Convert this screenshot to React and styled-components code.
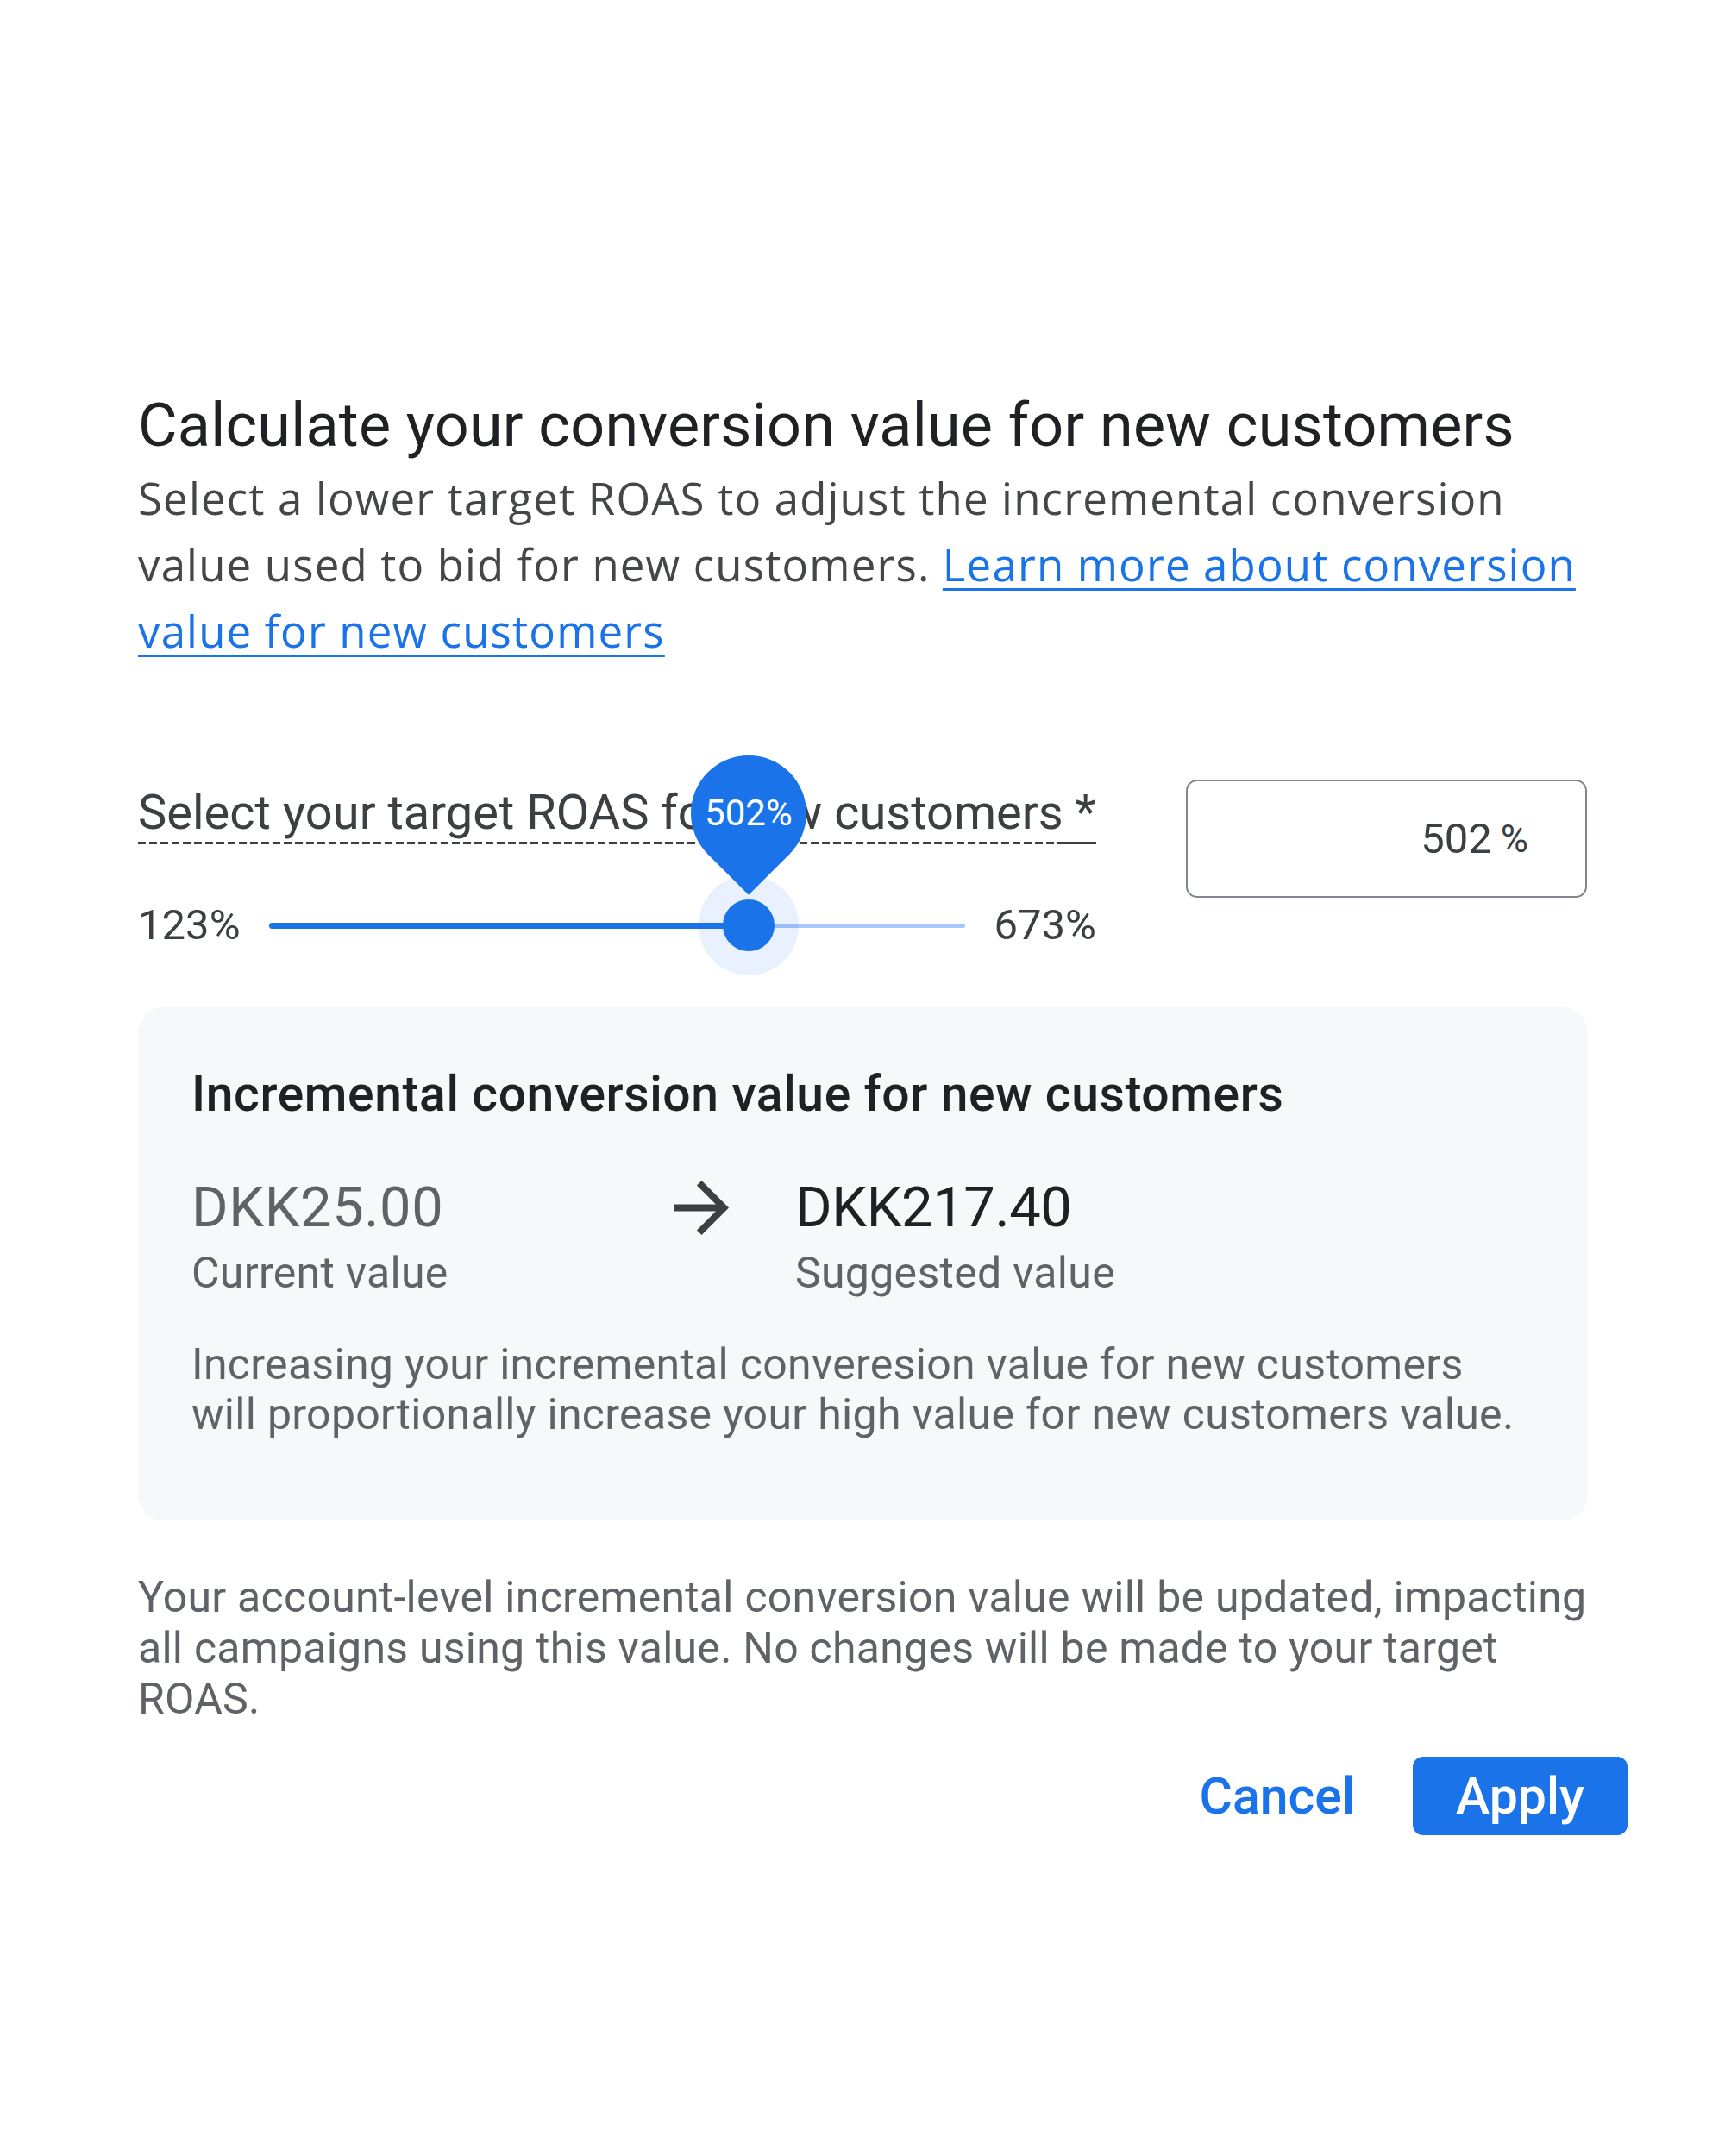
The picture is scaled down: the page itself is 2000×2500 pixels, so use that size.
import React from "react";
import styled, { createGlobalStyle } from "styled-components";

const GlobalStyle = createGlobalStyle`
  html, body { margin: 0; padding: 0; background: #ffffff; }
  body { font-family: Roboto, "Liberation Sans", Arial, sans-serif; color: #202124; }
  *, *::before, *::after { box-sizing: border-box; }
`;

const BLUE = "#1a73e8";

const Page = styled.div`
  width: 2000px;
  min-height: 2500px;
  background: #ffffff;
  padding: 453px 0 0 160px;
`;

const Dialog = styled.div`
  width: 1727px;
  display: flex;
  flex-direction: column;
`;

const Title = styled.h1`
  margin: 0;
  font-family: Roboto, "Liberation Sans", sans-serif;
  font-weight: 400;
  font-size: 70px;
  line-height: 80px;
  letter-spacing: 0.25px;
  color: #202124;
  white-space: nowrap;
`;

const Description = styled.p`
  margin: 6px 0 0;
  width: 1700px;
  font-family: "Open Sans", Roboto, sans-serif;
  font-size: 51px;
  line-height: 77px;
  letter-spacing: 1.15px;
  color: #444746;
`;

const Link = styled.a`
  color: ${BLUE};
  text-decoration: underline;
  text-decoration-thickness: 3px;
  text-underline-offset: 8px;
`;

const Controls = styled.div`
  display: flex;
  align-items: flex-start;
  gap: 104px;
  margin-top: 134px;
`;

const SliderColumn = styled.div`
  width: 1111px;
  padding-top: 8px;
  display: flex;
  flex-direction: column;
`;

const FieldLabel = styled.div`
  font-size: 56px;
  line-height: 60px;
  color: #3c4043;
  white-space: nowrap;
`;

const Dashed = styled.span`
  padding-bottom: 4px;
  background-image: linear-gradient(to right, #3c4043 0 9px, transparent 9px 13px);
  background-size: 13px 3px;
  background-repeat: repeat-x;
  background-position: left bottom;
`;

const Required = styled.span`
  padding-bottom: 4px;
  background: linear-gradient(#3c4043, #3c4043) left bottom / 100% 3px no-repeat;
`;

const SliderRow = styled.div`
  display: flex;
  align-items: center;
  gap: 33px;
  height: 60px;
  margin-top: 71px;
`;

const RangeLabel = styled.span`
  font-size: 49px;
  line-height: 60px;
  color: #3c4043;
  white-space: nowrap;
`;

const Track = styled.div`
  position: relative;
  flex: 1;
  height: 7px;
`;

const InactiveTrack = styled.div`
  position: absolute;
  left: 0;
  right: 0;
  top: 1px;
  height: 5px;
  border-radius: 3px;
  background: #a8c7fa;
`;

const ActiveTrack = styled.div`
  position: absolute;
  left: 0;
  top: 0;
  height: 7px;
  border-radius: 4px;
  background: ${BLUE};
`;

const Thumb = styled.div`
  position: absolute;
  top: 50%;
  width: 60px;
  height: 60px;
  margin-left: -30px;
  margin-top: -30px;
  border-radius: 50%;
  background: ${BLUE};
  box-shadow: 0 0 0 28px rgba(26, 115, 232, 0.1);
`;

const Bubble = styled.div`
  position: absolute;
  left: 50%;
  top: -167px;
  width: 134px;
  height: 134px;
  margin-left: -67px;
  border-radius: 50% 50% 0 50%;
  background: ${BLUE};
  transform: rotate(45deg);
  display: flex;
  align-items: center;
  justify-content: center;
`;

const BubbleText = styled.span`
  transform: rotate(-45deg);
  color: #ffffff;
  font-size: 42px;
  line-height: 1;
  white-space: nowrap;
`;

const ValueField = styled.div`
  width: 465px;
  height: 137px;
  border: 2px solid #80868b;
  border-radius: 13px;
  display: flex;
  align-items: center;
  justify-content: flex-end;
  padding-right: 66px;
  font-size: 49px;
  color: #3c4043;
`;

const Suffix = styled.span`
  margin-left: 10px;
  font-size: 44px;
`;

const Card = styled.section`
  width: 1681px;
  margin-top: 65px;
  background: #f7f8fa;
  border-radius: 30px;
  padding: 71px 61px 94px 62px;
`;

const CardTitle = styled.h2`
  margin: 0;
  font-size: 57px;
  line-height: 60px;
  font-weight: 500;
  letter-spacing: 0.6px;
  color: #202124;
`;

const Comparison = styled.div`
  display: grid;
  grid-template-columns: 560px 140px auto;
  margin-top: 64px;
  align-items: start;
`;

const Amount = styled.div`
  font-size: 65px;
  line-height: 74px;
  letter-spacing: ${(p) => (p.$muted ? "0.6px" : "-0.4px")};
  color: ${(p) => (p.$muted ? "#5f6368" : "#202124")};
`;

const AmountCaption = styled.div`
  margin-top: 11px;
  font-size: 50px;
  line-height: 56px;
  letter-spacing: 0.3px;
  color: #5f6368;
`;

const ArrowIcon = styled.svg`
  width: 63px;
  height: 63px;
  margin-top: 6px;
  fill: #3c4043;
`;

const Note = styled.p`
  margin: 49px 0 0;
  max-width: 1545px;
  font-size: 50px;
  line-height: 58px;
  letter-spacing: 0.3px;
  color: #5f6368;
`;

const Footer = styled.p`
  margin: 60px 0 0;
  width: 1700px;
  font-size: 50px;
  line-height: 59px;
  letter-spacing: 0.25px;
  color: #5f6368;
`;

const Actions = styled.div`
  display: flex;
  justify-content: flex-end;
  align-items: center;
  gap: 33px;
  margin-top: 37px;
`;

const TextButton = styled.button`
  border: none;
  background: transparent;
  padding: 0 34px;
  height: 91px;
  font-family: Roboto, sans-serif;
  font-size: 59px;
  font-weight: 500;
  color: ${BLUE};
  cursor: pointer;
`;

const PrimaryButton = styled.button`
  border: none;
  width: 249px;
  height: 91px;
  border-radius: 12px;
  background: ${BLUE};
  color: #ffffff;
  font-family: Roboto, sans-serif;
  font-size: 59px;
  font-weight: 500;
  cursor: pointer;
`;

const MIN = 123;
const MAX = 673;
const VALUE = 502;

export default function App() {
  const pct = ((VALUE - MIN) / (MAX - MIN)) * 100;
  return (
    <Page>
      <GlobalStyle />
      <Dialog>
        <Title>Calculate your conversion value for new customers</Title>
        <Description>
          Select a lower target ROAS to adjust the incremental conversion value used to bid for new
          customers.{" "}
          <Link href="#">Learn more about conversion value for new customers</Link>
        </Description>

        <Controls>
          <SliderColumn>
            <FieldLabel>
              <Dashed>Select your target ROAS for new customers</Dashed>
              <Required> *</Required>
            </FieldLabel>
            <SliderRow>
              <RangeLabel>{MIN}%</RangeLabel>
              <Track>
                <InactiveTrack />
                <ActiveTrack style={{ width: `${pct}%` }} />
                <Thumb style={{ left: `${pct}%` }}>
                  <Bubble>
                    <BubbleText>{VALUE}%</BubbleText>
                  </Bubble>
                </Thumb>
              </Track>
              <RangeLabel>{MAX}%</RangeLabel>
            </SliderRow>
          </SliderColumn>
          <ValueField>
            {VALUE}
            <Suffix>%</Suffix>
          </ValueField>
        </Controls>

        <Card>
          <CardTitle>Incremental conversion value for new customers</CardTitle>
          <Comparison>
            <div>
              <Amount $muted>DKK25.00</Amount>
              <AmountCaption>Current value</AmountCaption>
            </div>
            <ArrowIcon viewBox="160 -800 640 640" aria-hidden="true">
              <path d="M647-440H160v-80h487L423-744l57-56 320 320-320 320-57-56 224-224Z" />
            </ArrowIcon>
            <div>
              <Amount>DKK217.40</Amount>
              <AmountCaption>Suggested value</AmountCaption>
            </div>
          </Comparison>
          <Note>
            Increasing your incremental converesion value for new customers will proportionally
            increase your high value for new customers value.
          </Note>
        </Card>

        <Footer>
          Your account-level incremental conversion value will be updated, impacting all campaigns
          using this value. No changes will be made to your target ROAS.
        </Footer>

        <Actions>
          <TextButton>Cancel</TextButton>
          <PrimaryButton>Apply</PrimaryButton>
        </Actions>
      </Dialog>
    </Page>
  );
}
